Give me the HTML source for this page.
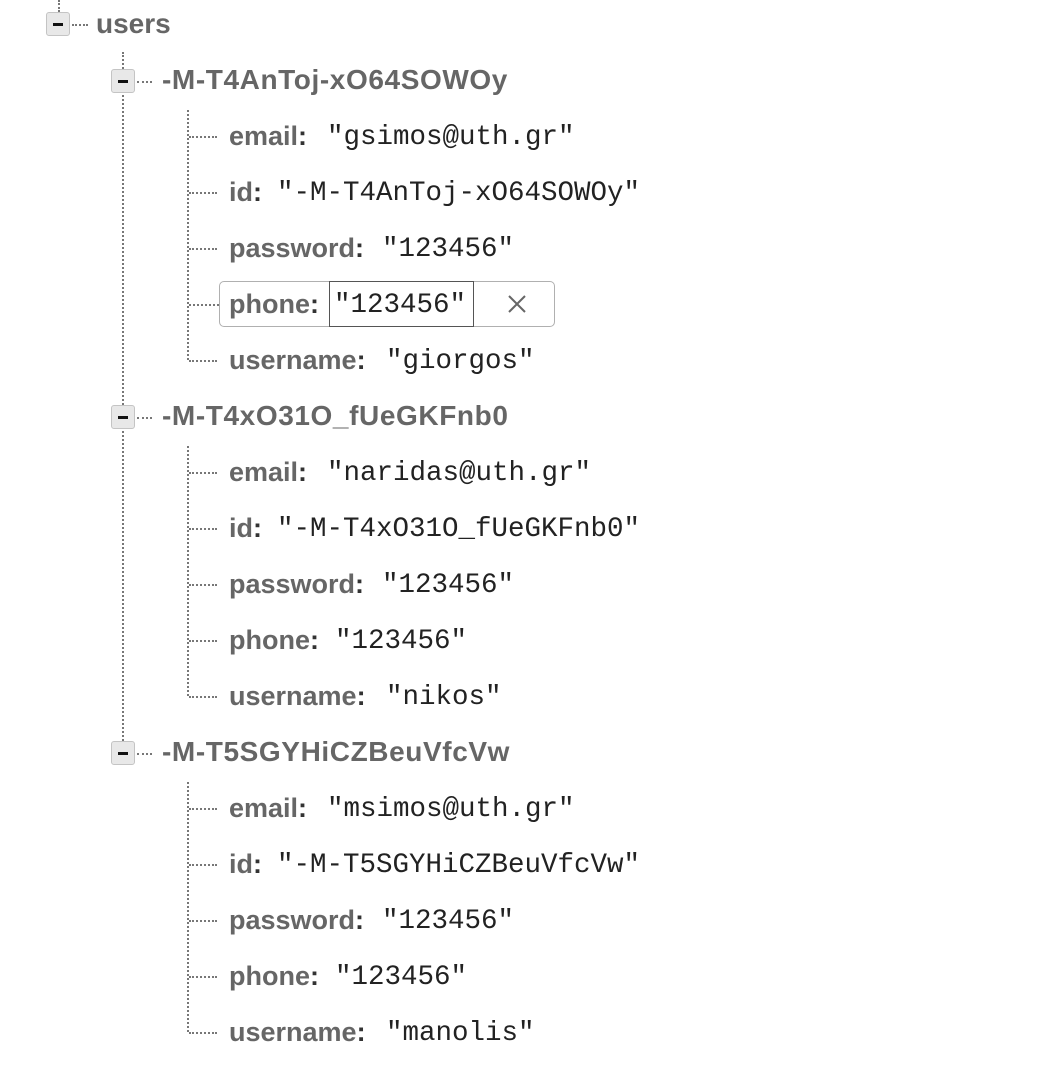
<!DOCTYPE html>
<html><head><meta charset="utf-8"><style>
html,body{margin:0;padding:0;background:#fff;width:1040px;height:1086px;overflow:hidden;position:relative}
.v{position:absolute;width:0;border-left:2px dotted #777}
.h{position:absolute;height:0;border-top:2px dotted #777}
.tg{position:absolute;width:24px;height:24px;background:#e8e8e8;border:1px solid #c4c4c4;border-radius:3px;box-sizing:border-box}
.tg:after{content:"";position:absolute;left:6px;top:10px;width:10px;height:3px;background:#111}
.k{position:absolute;font-family:"Liberation Sans",sans-serif;font-weight:bold;font-size:27px;color:#666;line-height:32px;white-space:nowrap}
.k b{color:#333}
.g{font-size:28px;letter-spacing:0.6px}
.val{position:absolute;font-family:"Liberation Mono",monospace;font-size:27.5px;color:#222;line-height:32px;white-space:nowrap;margin-top:2px}
</style></head><body>
<div class="v" style="left:58px;top:0;height:12px"></div>
<div class="tg" style="left:46px;top:12px"></div>
<div class="h" style="left:72px;top:24px;width:16px"></div>
<div class="k" style="left:96px;top:8px;font-size:28px">users</div>
<div class="v" style="left:122px;top:52px;height:700px"></div>

<div class="tg" style="left:111px;top:69px"></div>
<div class="h" style="left:137px;top:81px;width:15px"></div>
<div class="k g" style="left:162px;top:64px">-M-T4AnToj-xO64SOWOy</div>
<div class="v" style="left:187px;top:110px;height:250px"></div>
<div class="h" style="left:189px;top:136px;width:28px"></div>
<div class="h" style="left:189px;top:192px;width:28px"></div>
<div class="h" style="left:189px;top:248px;width:28px"></div>
<div class="h" style="left:189px;top:304px;width:30px"></div>
<div class="h" style="left:189px;top:360px;width:28px"></div>
<div class="k" style="left:229px;top:120px">email<b>:</b></div><div class="val" style="left:327px;top:120px">"gsimos@uth.gr"</div>
<div class="k" style="left:229px;top:176px">id<b>:</b></div><div class="val" style="left:277px;top:176px">"-M-T4AnToj-xO64SOWOy"</div>
<div class="k" style="left:229px;top:232px">password<b>:</b></div><div class="val" style="left:382px;top:232px">"123456"</div>
<div style="position:absolute;left:219px;top:281px;width:336px;height:46px;border:1.5px solid #b0b0b0;border-radius:5px;box-sizing:border-box;background:#fff"></div>
<div style="position:absolute;left:329px;top:281px;width:145px;height:46px;border:1.5px solid #555;box-sizing:border-box"></div>
<div class="k" style="left:229px;top:288px">phone<b>:</b></div><div class="val" style="left:334px;top:288px">"123456"</div>
<svg style="position:absolute;left:507px;top:294px" width="20" height="20"><path d="M2 2L18 18M18 2L2 18" stroke="#666" stroke-width="2"/></svg>
<div class="k" style="left:229px;top:344px">username<b>:</b></div><div class="val" style="left:386px;top:344px">"giorgos"</div>

<div class="tg" style="left:111px;top:405px"></div>
<div class="h" style="left:137px;top:417px;width:15px"></div>
<div class="k g" style="left:162px;top:400px">-M-T4xO31O_fUeGKFnb0</div>
<div class="v" style="left:187px;top:446px;height:250px"></div>
<div class="h" style="left:189px;top:472px;width:28px"></div>
<div class="h" style="left:189px;top:528px;width:28px"></div>
<div class="h" style="left:189px;top:584px;width:28px"></div>
<div class="h" style="left:189px;top:640px;width:28px"></div>
<div class="h" style="left:189px;top:696px;width:28px"></div>
<div class="k" style="left:229px;top:456px">email<b>:</b></div><div class="val" style="left:327px;top:456px">"naridas@uth.gr"</div>
<div class="k" style="left:229px;top:512px">id<b>:</b></div><div class="val" style="left:277px;top:512px">"-M-T4xO31O_fUeGKFnb0"</div>
<div class="k" style="left:229px;top:568px">password<b>:</b></div><div class="val" style="left:382px;top:568px">"123456"</div>
<div class="k" style="left:229px;top:624px">phone<b>:</b></div><div class="val" style="left:335px;top:624px">"123456"</div>
<div class="k" style="left:229px;top:680px">username<b>:</b></div><div class="val" style="left:386px;top:680px">"nikos"</div>

<div class="tg" style="left:111px;top:741px"></div>
<div class="h" style="left:137px;top:753px;width:15px"></div>
<div class="k g" style="left:162px;top:736px">-M-T5SGYHiCZBeuVfcVw</div>
<div class="v" style="left:187px;top:782px;height:250px"></div>
<div class="h" style="left:189px;top:808px;width:28px"></div>
<div class="h" style="left:189px;top:864px;width:28px"></div>
<div class="h" style="left:189px;top:920px;width:28px"></div>
<div class="h" style="left:189px;top:976px;width:28px"></div>
<div class="h" style="left:189px;top:1032px;width:28px"></div>
<div class="k" style="left:229px;top:792px">email<b>:</b></div><div class="val" style="left:327px;top:792px">"msimos@uth.gr"</div>
<div class="k" style="left:229px;top:848px">id<b>:</b></div><div class="val" style="left:277px;top:848px">"-M-T5SGYHiCZBeuVfcVw"</div>
<div class="k" style="left:229px;top:904px">password<b>:</b></div><div class="val" style="left:382px;top:904px">"123456"</div>
<div class="k" style="left:229px;top:960px">phone<b>:</b></div><div class="val" style="left:335px;top:960px">"123456"</div>
<div class="k" style="left:229px;top:1016px">username<b>:</b></div><div class="val" style="left:386px;top:1016px">"manolis"</div>
</body></html>
